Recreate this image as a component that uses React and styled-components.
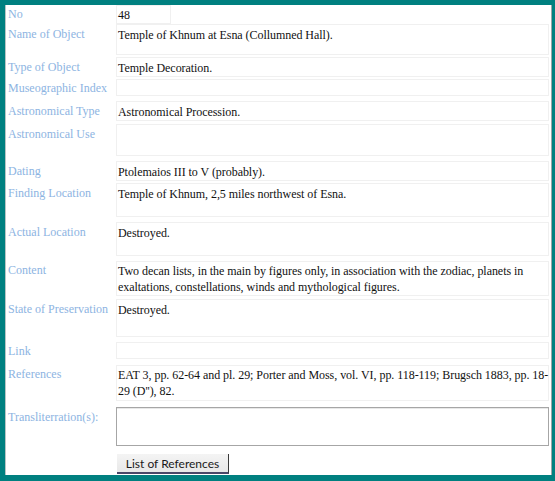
import React from "react"
import styled, { createGlobalStyle } from "styled-components"

const GlobalStyle = createGlobalStyle`
  html, body {
    margin: 0;
    padding: 0;
    background: #008080;
  }
  body {
    width: 555px;
    height: 481px;
    overflow: hidden;
  }
`

const Panel = styled.section`
  box-sizing: border-box;
  margin: 5px 0 0 5px;
  width: 547px;
  height: 470px;
  background: #fff;
  border-left: 1px solid #b8c4c4;
  border-right: 1px solid #9aa8a8;
  padding: 0 2px 0 0;
  display: flex;
  flex-direction: column;
  font-family: "Liberation Serif", "Times New Roman", serif;
  font-size: 12px;
`

const Row = styled.div`
  display: grid;
  grid-template-columns: 110px 1fr;
  margin-top: ${p => p.$gap}px;
  height: ${p => p.$h}px;
`

const Label = styled.div`
  color: #8db4e2;
  padding: ${p => p.$pad}px 0 0 2px;
  line-height: 16px;
  white-space: nowrap;
`

const Field = styled.div`
  box-sizing: border-box;
  border: 1px solid #f0f0f0;
  color: #111;
  padding: ${p => p.$pad}px 0 0 1px;
  line-height: 16px;
  white-space: nowrap;
  letter-spacing: -0.05px;
  width: ${p => (p.$narrow ? "55px" : "auto")};
`

const TextBox = styled.div`
  box-sizing: border-box;
  border: 1px solid #a6a6a6;
  box-shadow: inset 0 1px 0 #e8e8e8;
  height: 100%;
`

const ButtonRow = styled.div`
  display: grid;
  grid-template-columns: 111px auto;
  margin-top: 8px;
  justify-content: start;
`

const Button = styled.button`
  box-sizing: border-box;
  width: 112px;
  height: 20px;
  padding: 0;
  font-family: Lato, "Liberation Sans", sans-serif;
  font-size: 12px;
  color: #1a1a1a;
  background: linear-gradient(#f4f4f4, #e8e8e8);
  border: none;
  border-right: 1px solid #3a3a3a;
  border-bottom: 2px solid #4a4668;
  cursor: pointer;
`

const rows = [
  { label: "No", value: "48", gap: 0, h: 17, narrow: true, pad: 1 },
  { label: "Name of Object", value: "Temple of Khnum at Esna (Collumned Hall).", gap: 2, h: 31, pad: 2 },
  { label: "Type of Object", value: "Temple Decoration.", gap: 2, h: 17, pad: 2 },
  { label: "Museographic Index", value: "", gap: 5, h: 17, pad: 1 },
  { label: "Astronomical Type", value: "Astronomical Procession.", gap: 5, h: 17, pad: 2 },
  { label: "Astronomical Use", value: "", gap: 6, h: 32, pad: 2 },
  { label: "Dating", value: "Ptolemaios III to V (probably).", gap: 5, h: 18, pad: 2 },
  { label: "Finding Location", value: "Temple of Khnum, 2,5 miles northwest of Esna.", gap: 4, h: 34, pad: 2 },
  { label: "Actual Location", value: "Destroyed.", gap: 5, h: 34, pad: 2 },
  {
    label: "Content",
    value: [
      "Two decan lists, in the main by figures only, in association with the zodiac, planets in",
      "exaltations, constellations, winds and mythological figures.",
    ],
    gap: 5,
    h: 33,
    pad: 1,
  },
  { label: "State of Preservation", value: "Destroyed.", gap: 5, h: 38, pad: 2 },
  { label: "Link", value: "", gap: 5, h: 16, pad: 1 },
  {
    label: "References",
    value: [
      "EAT 3, pp. 62-64 and pl. 29; Porter and Moss, vol. VI, pp. 118-119; Brugsch 1883, pp. 18-",
      "29 (D''), 82.",
    ],
    gap: 7,
    h: 36,
    pad: 1,
  },
]

const renderValue = value =>
  Array.isArray(value)
    ? value.map((line, i) => (
        <React.Fragment key={i}>
          {i > 0 && <br />}
          {line}
        </React.Fragment>
      ))
    : value

const App = () => {
  return (
    <>
      <GlobalStyle />
      <Panel>
        {rows.map(row => (
          <Row key={row.label} $gap={row.gap} $h={row.h}>
            <Label $pad={row.pad}>{row.label}</Label>
            <Field $pad={row.pad} $narrow={row.narrow}>
              {renderValue(row.value)}
            </Field>
          </Row>
        ))}
        <Row $gap={6} $h={39}>
          <Label $pad={2}>Transliterration(s):</Label>
          <TextBox />
        </Row>
        <ButtonRow>
          <span />
          <Button>List of References</Button>
        </ButtonRow>
      </Panel>
    </>
  )
}

export default App
